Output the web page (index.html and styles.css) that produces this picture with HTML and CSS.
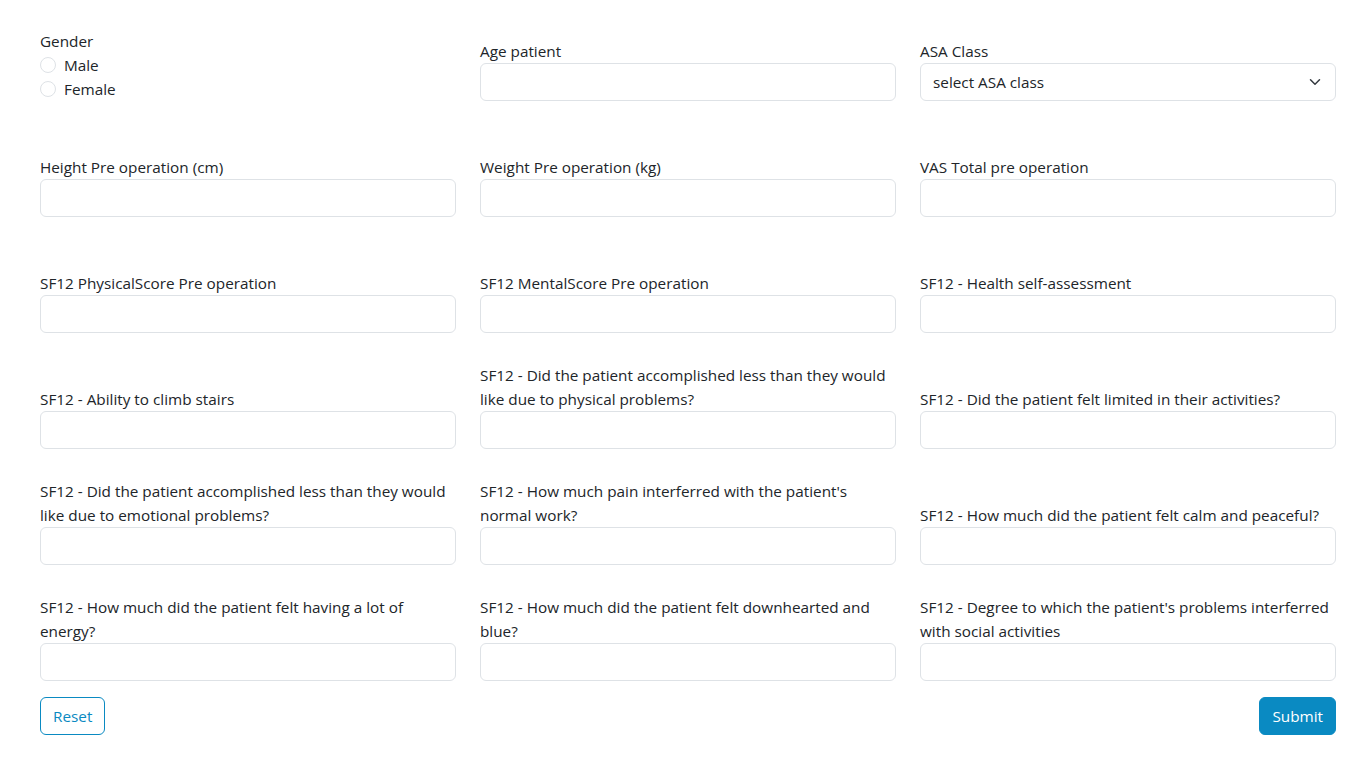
FILE: index.html
```html
<!DOCTYPE html>
<html lang="en">
<head>
<meta charset="utf-8">
<title>Form</title>
<link rel="stylesheet" href="styles.css">
</head>
<body>
<form class="page">
  <div class="grid">
    <div class="field">
      <div class="label">Gender</div>
      <label class="radio"><span class="circle"></span>Male</label>
      <label class="radio"><span class="circle"></span>Female</label>
    </div>
    <div class="field">
      <label class="label">Age patient</label>
      <div class="input"></div>
    </div>
    <div class="field">
      <label class="label">ASA Class</label>
      <div class="input select">
        <span>select ASA class</span>
        <svg width="16" height="16" viewBox="0 0 16 16"><path d="M2 5l6 6 6-6" fill="none" stroke="#343a40" stroke-width="2" stroke-linecap="round" stroke-linejoin="round"/></svg>
      </div>
    </div>

    <div class="field"><label class="label">Height Pre operation (cm)</label><div class="input"></div></div>
    <div class="field"><label class="label">Weight Pre operation (kg)</label><div class="input"></div></div>
    <div class="field"><label class="label">VAS Total pre operation</label><div class="input"></div></div>

    <div class="field"><label class="label">SF12 PhysicalScore Pre operation</label><div class="input"></div></div>
    <div class="field"><label class="label">SF12 MentalScore Pre operation</label><div class="input"></div></div>
    <div class="field"><label class="label">SF12 - Health self-assessment</label><div class="input"></div></div>

    <div class="field"><label class="label">SF12 - Ability to climb stairs</label><div class="input"></div></div>
    <div class="field"><label class="label">SF12 - Did the patient accomplished less than they would like due to physical problems?</label><div class="input"></div></div>
    <div class="field"><label class="label">SF12 - Did the patient felt limited in their activities?</label><div class="input"></div></div>

    <div class="field"><label class="label">SF12 - Did the patient accomplished less than they would like due to emotional problems?</label><div class="input"></div></div>
    <div class="field"><label class="label">SF12 - How much pain interferred with the patient's normal work?</label><div class="input"></div></div>
    <div class="field"><label class="label">SF12 - How much did the patient felt calm and peaceful?</label><div class="input"></div></div>

    <div class="field"><label class="label">SF12 - How much did the patient felt having a lot of energy?</label><div class="input"></div></div>
    <div class="field"><label class="label">SF12 - How much did the patient felt downhearted and blue?</label><div class="input"></div></div>
    <div class="field"><label class="label">SF12 - Degree to which the patient's problems interferred with social activities</label><div class="input"></div></div>
  </div>
  <div class="actions">
    <button type="reset" class="btn btn-outline">Reset</button>
    <button type="submit" class="btn btn-primary">Submit</button>
  </div>
</form>
</body>
</html>
```
FILE: styles.css
```css
* { box-sizing: border-box; }
html, body { margin: 0; background: #fff; }
body {
  font-family: "Segoe UI", "Open Sans", "Noto Sans", sans-serif;
  font-size: 15.3px;
  line-height: 24px;
  color: #212529;
}
.page {
  width: 1296px;
  margin-left: 40px;
  padding-top: 15px;
}
.grid {
  display: grid;
  grid-template-columns: repeat(3, 416px);
  column-gap: 24px;
  grid-auto-rows: 86px;
  row-gap: 30px;
  align-items: end;
}
.field {
  display: flex;
  flex-direction: column;
}
.label { display: block; }
.radio {
  display: flex;
  align-items: center;
  height: 24px;
}
.circle {
  width: 16px;
  height: 16px;
  border: 1px solid #dee2e6;
  border-radius: 50%;
  margin-right: 8px;
}
.input {
  height: 38px;
  border: 1px solid #dee2e6;
  border-radius: 6px;
  background: #fff;
}
.select {
  display: flex;
  align-items: center;
  justify-content: space-between;
  padding: 0 14px 0 12px;
}
.select svg { width: 12px; height: 12px; }
.actions {
  display: flex;
  justify-content: space-between;
  margin-top: 16px;
}
.btn {
  font: inherit;
  height: 38px;
  padding: 0 12px;
  border-radius: 6px;
  border: 1px solid #0a8ac2;
  cursor: pointer;
}
.btn-outline { background: #fff; color: #0a8ac2; }
.btn-primary { background: #0a8ac2; color: #fff; }
```
